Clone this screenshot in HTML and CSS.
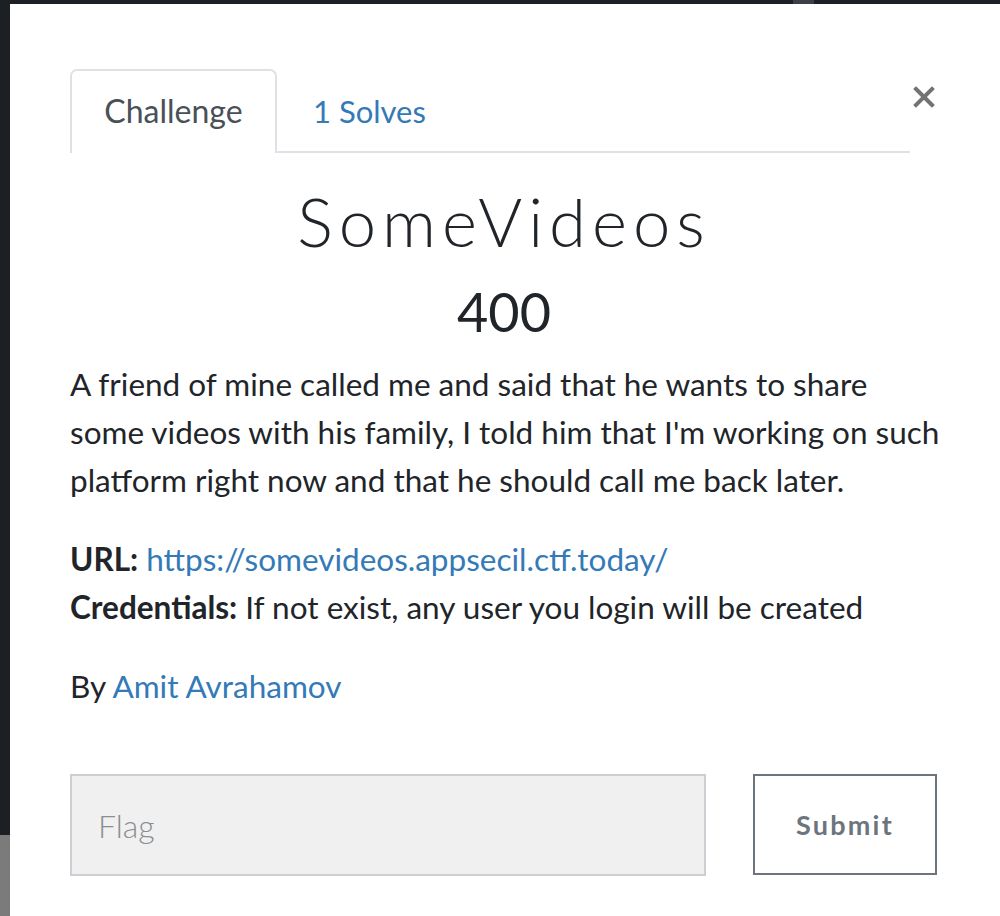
FILE: index.html
```html
<!DOCTYPE html>
<html lang="en">
<head>
<meta charset="utf-8">
<title>SomeVideos</title>
<link rel="stylesheet" href="styles.css">
</head>
<body>
<div class="topbar">
  <span class="topbar-box"></span>
</div>
<div class="modal">
  <div class="modal-head">
    <nav class="tabs">
      <a class="tab active" href="#">Challenge</a>
      <a class="tab" href="#">1 Solves</a>
    </nav>
    <button class="close" type="button" aria-label="Close">
      <svg width="22" height="22" viewBox="0 0 22 22"><path d="M3 3 L19 19 M19 3 L3 19" stroke="#737373" stroke-width="4" stroke-linecap="square"/></svg>
    </button>
  </div>
  <h2 class="title">SomeVideos</h2>
  <h3 class="points">400</h3>
  <div class="desc">
    <p>A friend of mine called me and said that he wants to share some videos with his family, I told him that I'm working on such platform right now and that he should call me back later.</p>
    <p class="meta"><strong>URL:</strong> <a href="#">https://somevideos.appsecil.ctf.today/</a><br><strong>Credentials:</strong> If not exist, any user you login will be created</p>
    <p class="by">By <a href="#">Amit Avrahamov</a></p>
  </div>
  <form class="flag-form">
    <input class="flag-input" type="text" placeholder="Flag">
    <button class="submit" type="button">Submit</button>
  </form>
</div>
</body>
</html>
```
FILE: styles.css
```css
html, body {
  margin: 0;
  padding: 0;
}
body {
  background: linear-gradient(to bottom, #1c1f23 0, #1c1f23 835px, #7b7b7b 835px);
  min-height: 916px;
  overflow: hidden;
  font-family: "Lato", "Liberation Sans", sans-serif;
  color: #212529;
}
.topbar {
  height: 4px;
  display: flex;
  background: #1c1f23;
}
.topbar-box {
  width: 21px;
  height: 4px;
  background: #3c3f44;
  margin-left: 793px;
}
.modal {
  margin-left: 10px;
  background: #fff;
  min-height: 912px;
  padding: 65px 54px 0 60px;
  box-sizing: border-box;
}
.modal-head {
  display: flex;
  align-items: flex-start;
}
.tabs {
  display: flex;
  width: 840px;
  border-bottom: 2px solid #dee2e6;
}
.tab {
  display: block;
  height: 80px;
  padding: 0 34px;
  box-sizing: border-box;
  font-size: 31px;
  line-height: 80px;
  color: #337ab7;
  text-decoration: none;
  border: 2px solid transparent;
  border-bottom: none;
  border-radius: 7px 7px 0 0;
  margin-bottom: -2px;
}
.tab.active {
  color: #495057;
  border-color: #dee2e6;
  background: #fff;
  height: 84px;
  width: 207px;
  text-align: center;
  padding: 0;
  font-size: 32px;
}
.close {
  margin-left: 3px;
  margin-top: 17px;
  padding: 0;
  border: none;
  background: none;
  width: 22px;
  height: 22px;
  display: block;
}
.close svg {
  display: block;
}
.title {
  margin: 28px 8px 0 0;
  text-align: center;
  font-family: "Lato", sans-serif;
  font-weight: 300;
  font-size: 67px;
  line-height: 80px;
  letter-spacing: 6px;
  color: #212529;
}
.points {
  margin: 20px 8px 0 0;
  text-align: center;
  font-weight: 400;
  font-size: 54px;
  line-height: 62px;
  color: #212529;
}
.desc {
  margin-top: 17px;
  font-size: 31.5px;
  line-height: 48px;
}
.desc p {
  margin: 0 0 31px;
}
.desc a {
  color: #337ab7;
  text-decoration: none;
}
.desc strong {
  font-weight: 700;
}
.desc .by {
  margin-bottom: 0;
}
.flag-form {
  display: flex;
  align-items: flex-start;
  margin-top: 64px;
}
.flag-input {
  width: 636px;
  height: 102px;
  box-sizing: border-box;
  background: #f0f0f0;
  border: 2px solid #ccd0d5;
  padding: 0 26px;
  font-family: "Lato", sans-serif;
  font-weight: 300;
  font-size: 32px;
  color: #495057;
  outline: none;
}
.flag-input::placeholder {
  color: #8a8e93;
}
.submit {
  margin-left: 47px;
  width: 184px;
  height: 101px;
  box-sizing: border-box;
  background: #fff;
  border: 2px solid #6c757d;
  font-family: "Lato", sans-serif;
  font-weight: 700;
  font-size: 27px;
  letter-spacing: 2.2px;
  color: #6c757d;
  padding: 0;
}
```
